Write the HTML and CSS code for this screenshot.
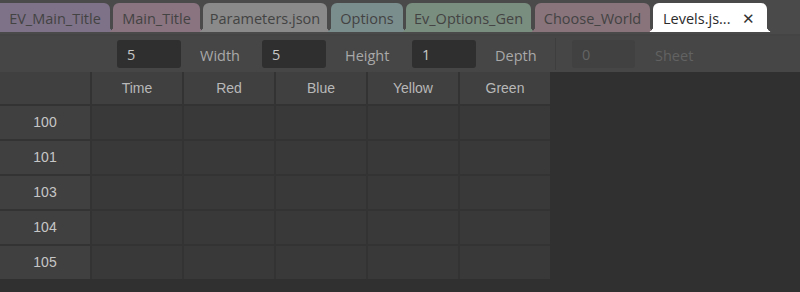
FILE: index.html
```html
<!DOCTYPE html>
<html lang="en">
<head>
	<meta charset="UTF-8">
	<title>Levels.json</title>
	<link rel="stylesheet" href="styles.css">
</head>
<body>
<div class="tab-bar">
    <div class="tab tab-purple">EV_Main_Title</div>
    <div class="tab tab-rose">Main_Title</div>
    <div class="tab tab-grey">Parameters.json</div>
    <div class="tab tab-teal">Options</div>
    <div class="tab tab-green">Ev_Options_Gen</div>
    <div class="tab tab-mauve">Choose_World</div>
    <div class="tab tab-active">
        <span>Levels.js...</span>
        <i class="close">&#x2715;</i>
    </div>
</div>
<div class="tool-bar">
    <div class="field">5</div>
    <span class="label w-width">Width</span>
    <div class="field">5</div>
    <span class="label w-height">Height</span>
    <div class="field">1</div>
    <span class="label w-depth">Depth</span>
    <i class="sep"></i>
    <div class="field disabled">0</div>
    <span class="label disabled">Sheet</span>
</div>
<div class="sheet">
    <div class="grid">
        <div class="corner"></div>
        <div class="col-head">Time</div>
        <div class="col-head">Red</div>
        <div class="col-head">Blue</div>
        <div class="col-head">Yellow</div>
        <div class="col-head">Green</div>

        <div class="row-head">100</div>
        <div class="cell"></div><div class="cell"></div><div class="cell"></div><div class="cell"></div><div class="cell"></div>
        <div class="row-head">101</div>
        <div class="cell"></div><div class="cell"></div><div class="cell"></div><div class="cell"></div><div class="cell"></div>
        <div class="row-head">103</div>
        <div class="cell"></div><div class="cell"></div><div class="cell"></div><div class="cell"></div><div class="cell"></div>
        <div class="row-head">104</div>
        <div class="cell"></div><div class="cell"></div><div class="cell"></div><div class="cell"></div><div class="cell"></div>
        <div class="row-head">105</div>
        <div class="cell"></div><div class="cell"></div><div class="cell"></div><div class="cell"></div><div class="cell"></div>
    </div>
</div>
</body>
</html>
```

FILE: styles.css
```css
    body,div,span,i{
        margin: 0;
        padding: 0;
    }
    body{
        width: 800px;
        height: 292px;
        overflow: hidden;
        background: #2f2f2f;
        font-family: "Open Sans", "Noto Sans", sans-serif;
    }
    i{
        font-style: normal;
    }

    /* tabs */
    .tab-bar{
        display: flex;
        align-items: flex-end;
        gap: 3px;
        height: 36px;
        padding-bottom: 2px;
        box-sizing: border-box;
        background: #4a4a4a;
        border-bottom: 2px solid #444;
    }
    .tab{
        position: relative;
        flex: none;
        height: 29px;
        line-height: 31px;
        box-sizing: border-box;
        border-radius: 6px 6px 0 0;
        font-size: 14.5px;
        color: #434343;
        text-align: center;
        white-space: nowrap;
    }
    .tab::before,
    .tab::after{
        content: "";
        position: absolute;
        bottom: 0;
        width: 6px;
        height: 6px;
    }
    .tab::before{
        left: -6px;
        background: radial-gradient(circle at 0 0, transparent 6px, var(--tab) 6.5px);
    }
    .tab::after{
        right: -6px;
        background: radial-gradient(circle at 100% 0, transparent 6px, var(--tab) 6.5px);
    }
    .tab-purple{ --tab: #7e7288; background: #7e7288; width: 110px; border-top-left-radius: 0; }
    .tab-rose{ --tab: #8a7480; background: #8a7480; width: 87px; }
    .tab-grey{ --tab: #8a8a8a; background: #8a8a8a; width: 124px; }
    .tab-teal{ --tab: #7b8e8e; background: #7b8e8e; width: 72px; margin-left: 1px; }
    .tab-green{ --tab: #7a8e7f; background: #7a8e7f; width: 125px; }
    .tab-mauve{ --tab: #89747b; background: #89747b; width: 115px; margin-left: 1px; }
    .tab-active{
        --tab: #ffffff;
        width: 114px;
        background: #fff;
        color: #2b2b2b;
        display: flex;
        justify-content: space-between;
        padding: 0 12px 0 10px;
    }
    .tab-active .close{
        font-size: 15px;
        color: #333;
    }

    /* toolbar */
    .tool-bar{
        display: flex;
        align-items: center;
        height: 36px;
        padding-left: 117px;
        background: #464646;
        font-size: 14.5px;
    }
    .field{
        flex: none;
        width: 64px;
        height: 28px;
        line-height: 30px;
        padding-left: 10px;
        box-sizing: border-box;
        border-radius: 3px;
        background: #2f2f2f;
        color: #c8c8c8;
    }
    .field.disabled{
        width: 63px;
        background: #414141;
        color: #646464;
    }
    .label{
        flex: none;
        margin-left: 19px;
        padding-top: 2px;
        color: #a9a9a9;
    }
    .w-width{ width: 62px; }
    .w-height{ width: 67px; }
    .w-depth{ width: 60px; }
    .label.disabled{
        margin-left: 20px;
        color: #626262;
    }
    .sep{
        flex: none;
        width: 1px;
        height: 32px;
        margin-right: 16px;
        background: #3e3e3e;
    }

    /* table */
    .sheet{
        height: 220px;
        background: #303030;
    }
    .grid{
        display: grid;
        grid-template-columns: 90px repeat(5, 90px);
        grid-template-rows: 32px repeat(5, 33px);
        gap: 2px;
        width: 550px;
        background: #333;
        font-family: "Liberation Sans", Arial, sans-serif;
        font-size: 14px;
    }
    .corner,
    .col-head,
    .row-head{
        background: #404040;
        text-align: center;
    }
    .col-head{
        line-height: 32px;
        color: #b8b8b8;
    }
    .row-head{
        line-height: 33px;
        color: #c6c6c6;
    }
    .cell{
        background: #393939;
    }
```
